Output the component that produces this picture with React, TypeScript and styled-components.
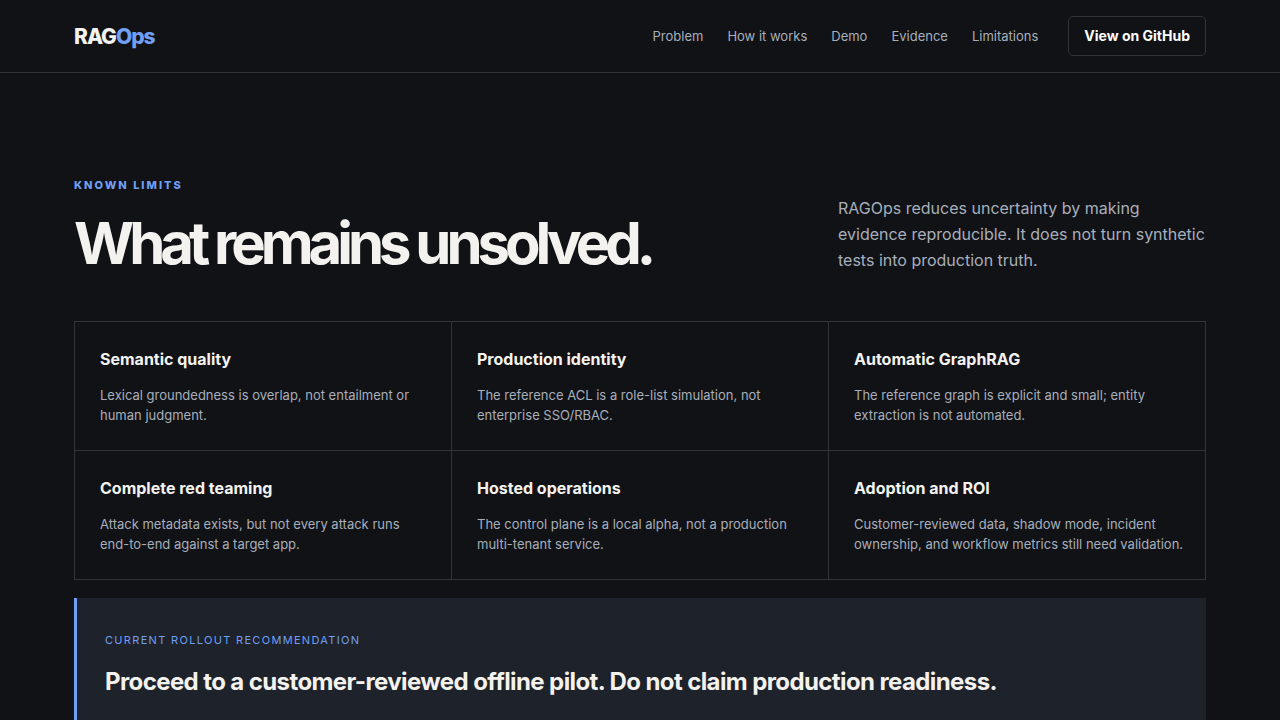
import React from "react";
import styled, { createGlobalStyle } from "styled-components";

const Global = createGlobalStyle`
  * { box-sizing: border-box; }
  body {
    margin: 0;
    background: #101216;
    color: #f4f2ee;
    font-family: Inter, "Liberation Sans", sans-serif;
    font-size: 16px;
    -webkit-font-smoothing: antialiased;
  }
  h1, h2, h3, p { margin: 0; }
  a { color: inherit; text-decoration: none; }
`;

const Header = styled.header`
  border-bottom: 1px solid #30343b;
`;

const Container = styled.div`
  width: 100%;
  max-width: 1180px;
  margin: 0 auto;
  padding: 0 24px;
`;

const Bar = styled(Container)`
  display: flex;
  align-items: center;
  justify-content: space-between;
  height: 72px;
`;

const Logo = styled.a`
  font-size: 21px;
  font-weight: 800;
  letter-spacing: -1px;
  span { color: #709ff3; }
`;

const Nav = styled.nav`
  display: flex;
  align-items: center;
  gap: 24px;
`;

const NavLink = styled.a`
  color: #a9afba;
  font-size: 13px;
`;

const GithubLink = styled.a`
  height: 40px;
  margin-left: 6px;
  padding: 0 15px;
  border: 1px solid #30343b;
  border-radius: 5px;
  color: #ffffff;
  font-size: 14px;
  line-height: 38px;
  font-weight: 700;
`;

const Section = styled(Container).attrs({ as: "main" })`
  padding-top: 104px;
  padding-bottom: 96px;
`;

const Heading = styled.div`
  display: flex;
  align-items: flex-end;
  justify-content: space-between;
  gap: 48px;
  margin-bottom: 48px;
`;

const Eyebrow = styled.p`
  margin-bottom: 20px;
  color: #709ff3;
  font-size: 11px;
  line-height: 16px;
  font-weight: 800;
  letter-spacing: 2px;
  text-transform: uppercase;
`;

const Title = styled.h1`
  font-size: 58px;
  line-height: 60px;
  font-weight: 700;
  letter-spacing: -5px;
`;

const Lead = styled.p`
  width: 368px;
  color: #a9afba;
  font-size: 16px;
  line-height: 26px;
`;

const Grid = styled.div`
  display: grid;
  grid-template-columns: repeat(3, 1fr);
  gap: 1px;
  border: 1px solid #30343b;
  background: #30343b;
`;

const Card = styled.article`
  padding: 26px 20px 25px 25px;
  background: #101216;
`;

const CardTitle = styled.h2`
  margin-bottom: 14px;
  font-size: 16px;
  line-height: 23px;
  font-weight: 700;
`;

const CardText = styled.p`
  color: #a9afba;
  font-size: 13px;
  line-height: 20px;
`;

const Callout = styled.section`
  margin-top: 18px;
  padding: 32px 28px;
  border-left: 3px solid #709ff3;
  background: #1e222a;
`;

const CalloutLabel = styled.p`
  margin-bottom: 16px;
  color: #709ff3;
  font-size: 11px;
  line-height: 20px;
  letter-spacing: 0.12em;
  text-transform: uppercase;
`;

const CalloutTitle = styled.h2`
  font-size: 24px;
  line-height: 32px;
  font-weight: 700;
  letter-spacing: -0.025em;
`;

const links = ["Problem", "How it works", "Demo", "Evidence", "Limitations"];

const limits = [
  ["Semantic quality", "Lexical groundedness is overlap, not entailment or human judgment."],
  ["Production identity", "The reference ACL is a role-list simulation, not enterprise SSO/RBAC."],
  ["Automatic GraphRAG", "The reference graph is explicit and small; entity extraction is not automated."],
  ["Complete red teaming", "Attack metadata exists, but not every attack runs end-to-end against a target app."],
  ["Hosted operations", "The control plane is a local alpha, not a production multi-tenant service."],
  ["Adoption and ROI", "Customer-reviewed data, shadow mode, incident ownership, and workflow metrics still need validation."],
];

export default function App() {
  return (
    <>
      <Global />
      <Header>
        <Bar>
          <Logo href="#">RAG<span>Ops</span></Logo>
          <Nav>
            {links.map((label) => (
              <NavLink key={label} href="#">{label}</NavLink>
            ))}
            <GithubLink href="#">View on GitHub</GithubLink>
          </Nav>
        </Bar>
      </Header>
      <Section>
        <Heading>
          <div>
            <Eyebrow>Known limits</Eyebrow>
            <Title>What remains unsolved.</Title>
          </div>
          <Lead>
            RAGOps reduces uncertainty by making evidence reproducible. It does not turn
            synthetic tests into production truth.
          </Lead>
        </Heading>
        <Grid>
          {limits.map(([title, text]) => (
            <Card key={title}>
              <CardTitle>{title}</CardTitle>
              <CardText>{text}</CardText>
            </Card>
          ))}
        </Grid>
        <Callout>
          <CalloutLabel>Current rollout recommendation</CalloutLabel>
          <CalloutTitle>
            Proceed to a customer-reviewed offline pilot. Do not claim production readiness.
          </CalloutTitle>
        </Callout>
      </Section>
    </>
  );
}
